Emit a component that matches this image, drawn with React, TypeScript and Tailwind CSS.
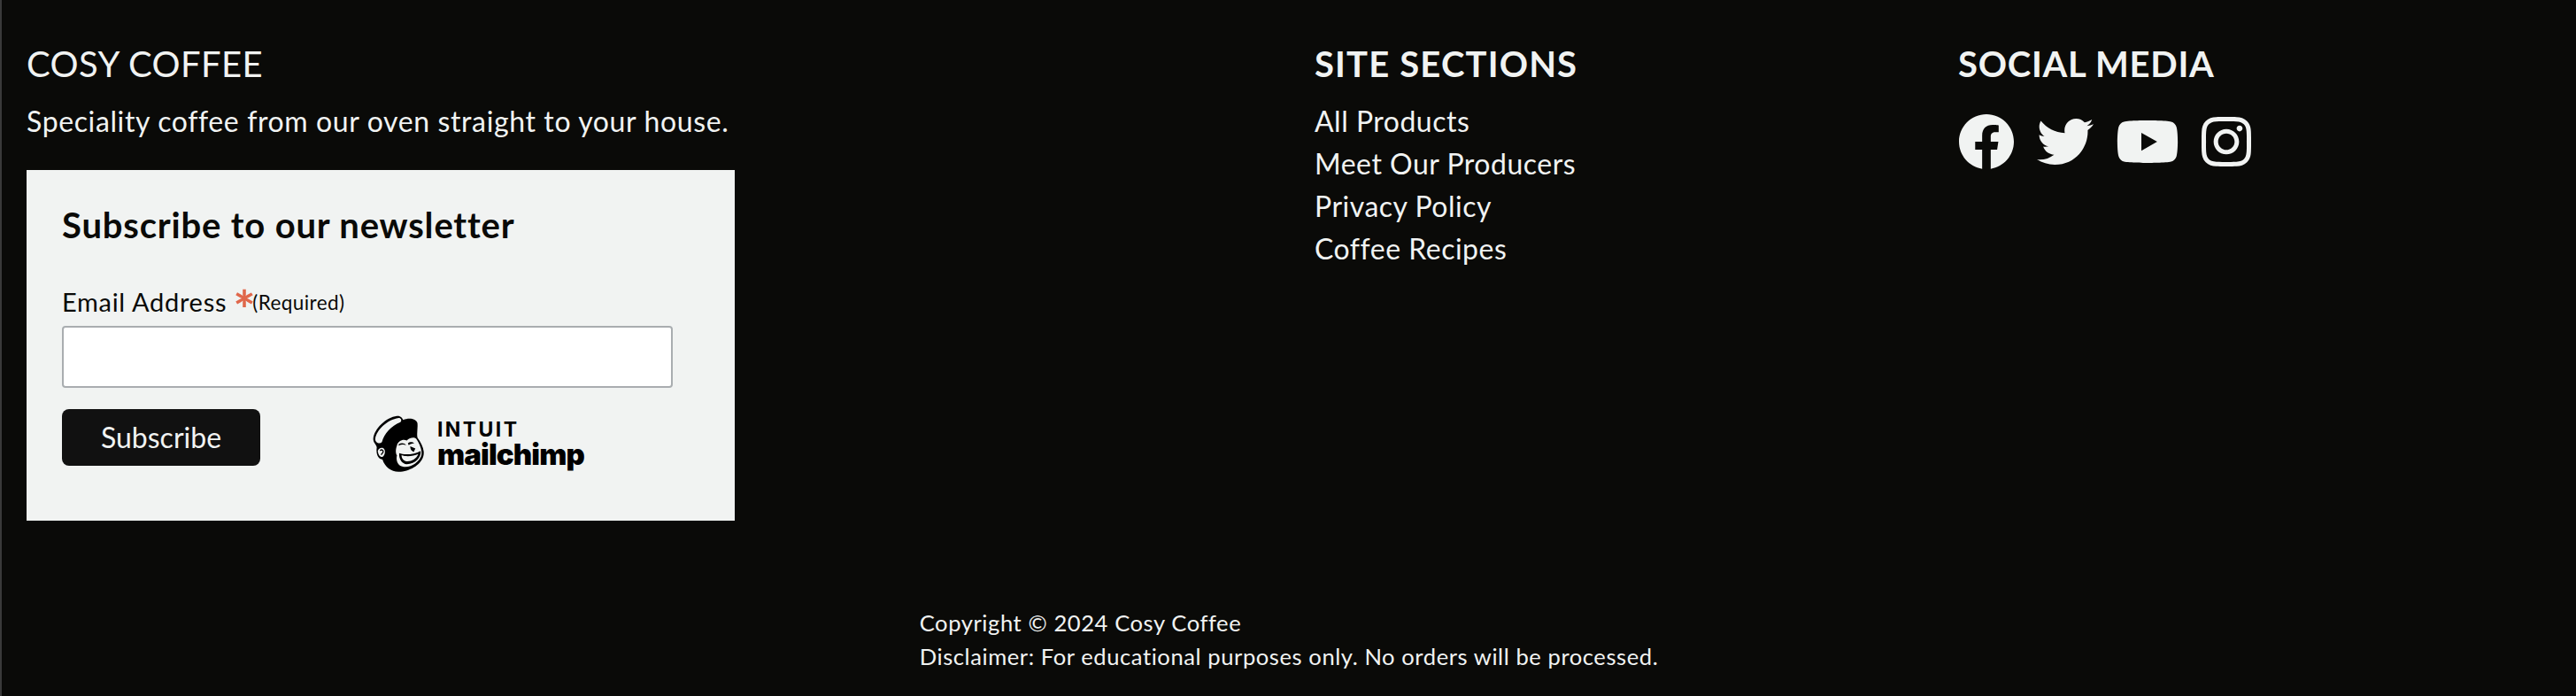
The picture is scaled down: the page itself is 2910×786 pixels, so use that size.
import { FaFacebook, FaInstagram, FaTwitter, FaYoutube } from "react-icons/fa";

const links = ["All Products", "Meet Our Producers", "Privacy Policy", "Coffee Recipes"];

function MailchimpLogo() {
  return (
    <div className="flex items-center gap-[13px] text-black">
      <svg width="60" height="66" viewBox="66 50 184 202" className="shrink-0">
        <path
          fill="#000"
          d="M68 135C71 98 113 60 150 55C164 54 168 62 172 69C190 61 216 63 221 80C223 98 218 114 221 130C236 150 248 175 241 196C232 226 190 249 155 248C130 248 108 231 100 206C85 206 77 186 80 166C82 156 68 150 68 135Z"
        />
        <path
          fill="#f1f3f2"
          d="M75 134C79 104 116 68 156 62C164 62 168 70 162 77C130 90 106 117 98 146C90 154 74 148 75 134Z"
        />
        <path
          fill="#f1f3f2"
          d="M150 158C153 143 170 134 184 140C196 128 214 128 218 136C228 152 240 176 234 194C226 216 195 238 168 230C152 226 146 208 150 192C144 182 146 168 150 158Z"
        />
        <path fill="#000" d="M156 153C166 147 176 149 182 156C172 153 164 154 156 158Z" />
        <path fill="#000" d="M188 150C194 144 204 144 210 150C204 150 196 152 191 156Z" />
        <path fill="#000" d="M196 160L214 168L208 180C200 176 196 170 196 160Z" />
        <path fill="#000" d="M158 184C176 192 212 188 232 176C236 196 214 222 184 222C168 222 156 204 158 184Z" />
        <path fill="#f1f3f2" d="M166 191C184 198 208 194 224 187C216 206 198 214 182 212C172 210 166 202 166 191Z" />
        <path
          fill="#f1f3f2"
          d="M84 176C86 166 100 162 106 170C111 178 108 192 100 197C92 199 84 188 84 176Z"
        />
        <path fill="none" stroke="#000" strokeWidth="4" d="M92 176C96 170 103 172 102 180C100 186 96 186 96 190" />
      </svg>
      <div className="flex flex-col font-['Inter',sans-serif]">
        <span className="text-[23px] leading-[24px] font-bold tracking-[2.4px]">INTUIT</span>
        <span className="text-[33px] leading-[32px] font-black tracking-[-0.9px]">mailchimp</span>
      </div>
    </div>
  );
}

export default function App() {
  return (
    <footer className="h-[786px] border-l-2 border-[#3a3a3a] bg-[#0a0a08] font-['Lato',sans-serif] text-[#f1f3f2]">
      <div className="grid grid-cols-[1455px_727px_1fr] pl-[28px] pt-[42px]">
        <div className="w-[800px]">
          <h2 className="text-[40px] leading-[60px] tracking-[0.4px]">COSY COFFEE</h2>
          <p className="mt-[11px] text-[32px] leading-[48px] tracking-[0.62px] whitespace-nowrap">
            Speciality coffee from our oven straight to your house.
          </p>
          <div className="mt-[31px] h-[396px] bg-[#f1f3f2] pl-[40px] pt-[34px] text-[#0a0a08]">
            <h3 className="text-[40px] leading-[56px] font-bold tracking-[0.82px]">Subscribe to our newsletter</h3>
            <label className="mt-[41px] flex h-[36px] items-center text-[29px] tracking-[0.7px]">
              Email Address
              <span className="ml-[7px] h-[36px] text-[60px] leading-[52px] font-bold text-[#e0674b]">*</span>
              <span className="mt-[2px] ml-[-4px] text-[22.5px] tracking-[0.4px]">(Required)</span>
            </label>
            <input
              type="email"
              className="mt-[9px] block h-[70px] w-[690px] rounded-[4px] border-2 border-[#a9adb0] bg-white"
            />
            <div className="mt-[24px] flex items-start">
              <button className="h-[64px] w-[224px] rounded-[8px] bg-[#111111] text-[32px] text-[#f1f3f2]">
                Subscribe
              </button>
              <div className="ml-[127px] mt-[6px]">
                <MailchimpLogo />
              </div>
            </div>
          </div>
        </div>
        <div>
          <h2 className="text-[40px] leading-[60px] font-bold tracking-[1.15px]">SITE SECTIONS</h2>
          <ul className="mt-[11px] text-[32px] leading-[48px] tracking-[0.5px]">
            {links.map((link) => (
              <li key={link}>{link}</li>
            ))}
          </ul>
        </div>
        <div>
          <h2 className="text-[40px] leading-[60px] font-bold tracking-[0.75px]">SOCIAL MEDIA</h2>
          <div className="mt-[26px] flex gap-[25px] text-[64px] leading-none">
            <FaFacebook />
            <FaTwitter />
            <FaYoutube className="w-[72px]" />
            <FaInstagram className="w-[56px]" />
          </div>
        </div>
      </div>
      <div className="mt-[96px] flex justify-center text-[25.6px] leading-[38.4px] tracking-[0.56px]">
        <div>
          <p>Copyright © 2024 Cosy Coffee</p>
          <p>Disclaimer: For educational purposes only. No orders will be processed.</p>
        </div>
      </div>
    </footer>
  );
}
